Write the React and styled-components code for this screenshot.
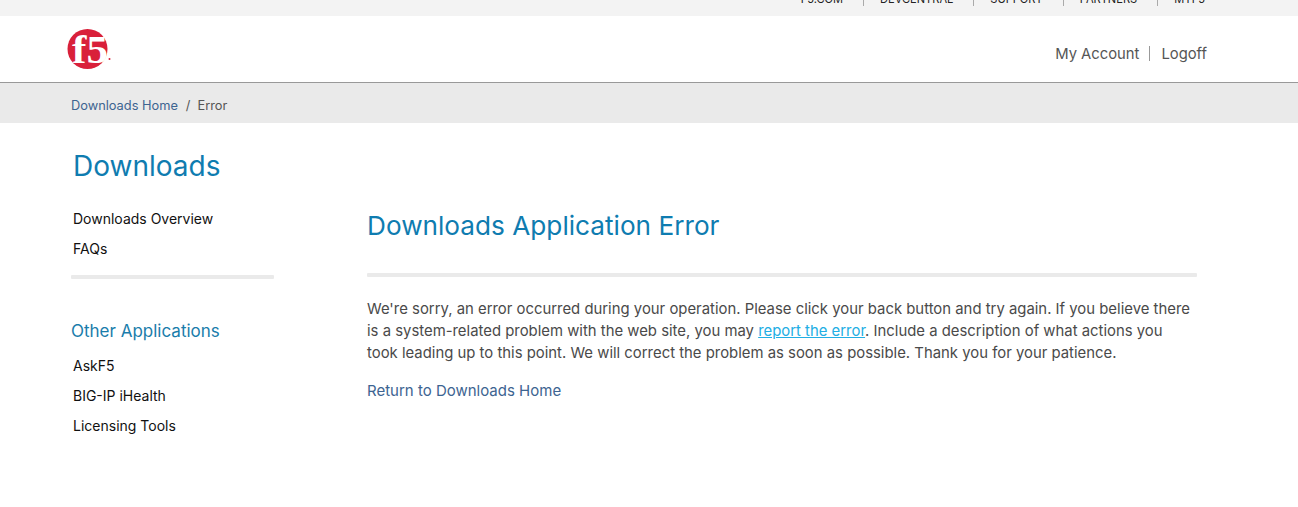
import React from 'react';
import styled, { createGlobalStyle } from 'styled-components';

const GlobalStyle = createGlobalStyle`
    html, body {
        margin: 0;
        padding: 0;
        background: #fff;
        font-family: "Inter", "Lato", sans-serif;
    }
`;

const TopStrip = styled.div`
    height: 16px;
    background-color: #f3f3f3;
    overflow: hidden;
    display: flex;
    justify-content: flex-end;
    align-items: flex-end;
    padding-right: 93px;
`;

const TopLink = styled.a`
    font-size: 11.1px;
    line-height: 14px;
    color: #222;
    margin-bottom: 10px;
`;

const TopSeparator = styled.span`
    width: 1px;
    height: 8px;
    background-color: #aaa;
    margin: 0 16px 10px 20px;
`;

const Header = styled.div`
    height: 66px;
    border-bottom: 1px solid #999;
    display: flex;
    justify-content: space-between;
    padding: 0 91px 0 66px;
`;

const LogoLink = styled.a`
    display: block;
    margin-top: 11px;
    height: 44px;
`;

const AccountNav = styled.div`
    display: flex;
    align-items: center;
    height: 75px;
    font-size: 14.8px;
    color: #555;
`;

const AccountSeparator = styled.span`
    width: 1px;
    height: 15px;
    background-color: #999;
    margin: 0 11px 0 10px;
`;

const Breadcrumb = styled.div`
    height: 40px;
    background-color: #eaeaea;
    display: flex;
    align-items: center;
    padding: 4px 0 0 71px;
    box-sizing: border-box;
    font-size: 12.8px;
    color: #555;
`;

const CrumbLink = styled.a`
    color: #3d6491;
`;

const CrumbSlash = styled.span`
    margin: 0 7px 0 8px;
`;

const Layout = styled.div`
    display: flex;
    padding-left: 71px;
`;

const Sidebar = styled.div`
    width: 203px;
    margin-right: 93px;
    flex-shrink: 0;
`;

const SideTitle = styled.h1`
    margin: 25px 0 0 2px;
    font-size: 28px;
    line-height: 36px;
    font-weight: 400;
    color: #0f7cb0;
`;

const SideList = styled.div`
    display: flex;
    flex-direction: column;
    gap: 10px;
    margin: ${({ $top }) => $top}px 0 0 2px;
`;

const SideLink = styled.a`
    font-size: 14px;
    line-height: 20px;
    color: #111;
`;

const Rule = styled.div`
    height: 4px;
    background-color: #eaeaea;
    border-radius: 1px;
`;

const SideRule = styled(Rule)`
    margin-top: 16px;
`;

const SideHeading = styled.h3`
    margin: 40px 0 0;
    font-size: 17px;
    line-height: 24px;
    font-weight: 400;
    color: #1a7dab;
`;

const Main = styled.div`
    width: 830px;
`;

const MainTitle = styled.h2`
    margin: 85px 0 0;
    font-size: 26.2px;
    line-height: 36px;
    font-weight: 400;
    color: #0f7cb0;
`;

const MainRule = styled(Rule)`
    margin-top: 29px;
`;

const Message = styled.p`
    margin: 21px 0 0;
    max-width: 826px;
    font-size: 14.88px;
    line-height: 22px;
    color: #4a4a4a;
`;

const ReportLink = styled.a`
    color: #22aee4;
    text-decoration: underline;
`;

const HomeLink = styled.a`
    display: block;
    margin-top: 16px;
    font-size: 15px;
    line-height: 22px;
    color: #3d6491;
`;

const LogoText = styled.text`
    font-family: "Liberation Serif", serif;
    font-weight: 700;
`;

const F5Logo = () => (
    <svg width="46" height="44" viewBox="0 0 46 44">
        <circle cx="21.5" cy="22" r="20" fill="#d9203a" />
        <LogoText x="6" y="36" fontSize="40" fill="#fff" textLength="36" lengthAdjust="spacingAndGlyphs">f5</LogoText>
        <circle cx="43.5" cy="32" r="1" fill="#d9203a" />
    </svg>
);

export default function App() {
    return (
        <>
            <GlobalStyle />
            <TopStrip>
                <TopLink>F5.COM</TopLink>
                <TopSeparator />
                <TopLink>DEVCENTRAL</TopLink>
                <TopSeparator />
                <TopLink>SUPPORT</TopLink>
                <TopSeparator />
                <TopLink>PARTNERS</TopLink>
                <TopSeparator />
                <TopLink>MYF5</TopLink>
            </TopStrip>
            <Header>
                <LogoLink><F5Logo /></LogoLink>
                <AccountNav>
                    <span>My Account</span>
                    <AccountSeparator />
                    <span>Logoff</span>
                </AccountNav>
            </Header>
            <Breadcrumb>
                <CrumbLink>Downloads Home</CrumbLink>
                <CrumbSlash>/</CrumbSlash>
                <span>Error</span>
            </Breadcrumb>
            <Layout>
                <Sidebar>
                    <SideTitle>Downloads</SideTitle>
                    <SideList $top={25}>
                        <SideLink>Downloads Overview</SideLink>
                        <SideLink>FAQs</SideLink>
                    </SideList>
                    <SideRule />
                    <SideHeading>Other Applications</SideHeading>
                    <SideList $top={13}>
                        <SideLink>AskF5</SideLink>
                        <SideLink>BIG-IP iHealth</SideLink>
                        <SideLink>Licensing Tools</SideLink>
                    </SideList>
                </Sidebar>
                <Main>
                    <MainTitle>Downloads Application Error</MainTitle>
                    <MainRule />
                    <Message>
                        We're sorry, an error occurred during your operation. Please click your back button and try again. If you believe there
                        is a system-related problem with the web site, you may <ReportLink>report the error</ReportLink>. Include a description of what actions you
                        took leading up to this point. We will correct the problem as soon as possible. Thank you for your patience.
                    </Message>
                    <HomeLink>Return to Downloads Home</HomeLink>
                </Main>
            </Layout>
        </>
    );
}
